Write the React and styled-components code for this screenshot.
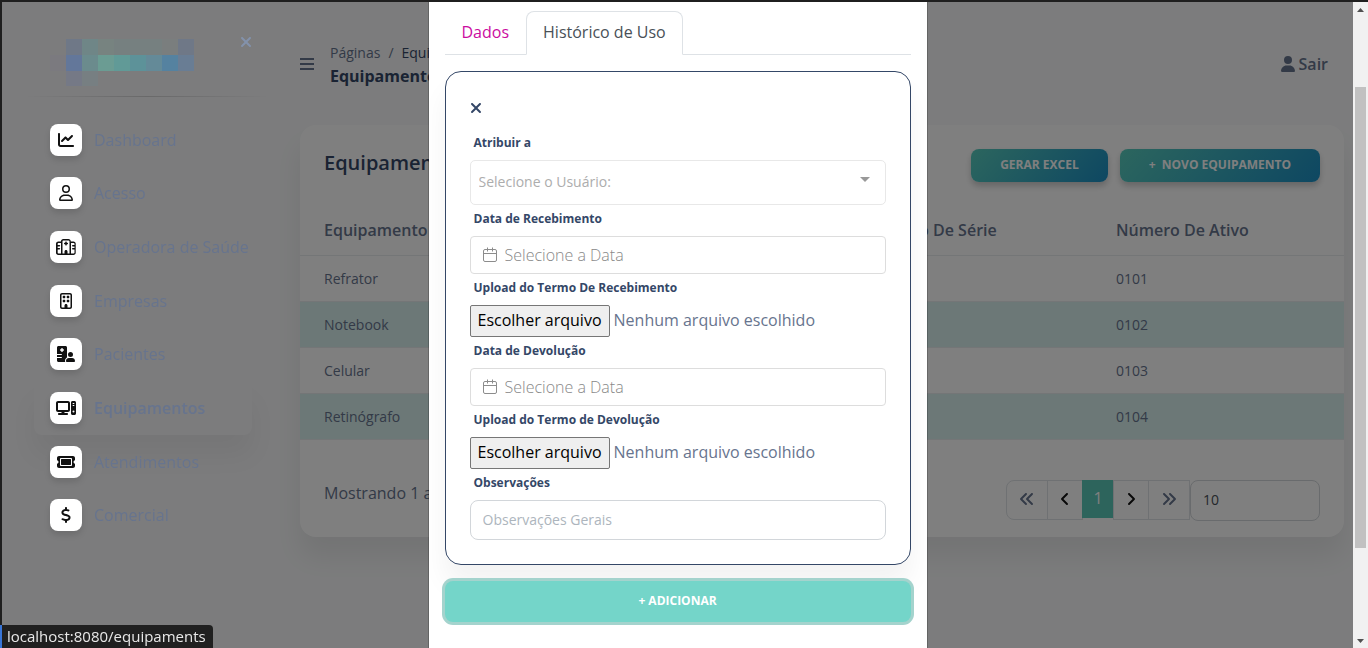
import React from "react";
import styled, { createGlobalStyle, css } from "styled-components";
import {
  FaChartLine,
  FaRegUser,
  FaRegHospital,
  FaRegBuilding,
  FaHospitalUser,
  FaComputer,
  FaTicket,
  FaDollarSign,
  FaUser,
  FaXmark,
  FaAnglesLeft,
  FaAnglesRight,
  FaAngleLeft,
  FaAngleRight,
} from "react-icons/fa6";

const GlobalStyle = createGlobalStyle`
  *, *::before, *::after { box-sizing: border-box; }
  body {
    margin: 0;
    overflow: hidden;
    background: #f8f9fa;
    color: #67748e;
    font: 400 16px/24px "Open Sans", "Noto Sans", sans-serif;
  }
  button, input, select { font-family: inherit; }
  a { color: inherit; text-decoration: none; }
`;

const Frame = styled.div`
  display: flex;
  min-height: 100vh;
  border-top: 2px solid #1f1f1f;
  border-left: 2px solid #1f1f1f;
`;

/* ---------- sidebar ---------- */

const Sidebar = styled.aside`
  position: relative;
  z-index: 3;
  flex: 0 0 282px;
  padding: 36px 32px 0;
`;

const Brand = styled.div`
  display: flex;
  justify-content: space-between;
  align-items: flex-start;
  height: 58px;
  padding-left: 16px;
`;

const IconButton = styled.button`
  display: flex;
  align-items: center;
  padding: 0;
  border: 0;
  background: none;
  color: ${(p) => p.$color};
  font-size: 16px;
  line-height: 24px;
  height: ${(p) => p.$height}px;
  svg {
    width: 12px;
    height: 16px;
  }
`;

const Divider = styled.hr`
  height: 1px;
  margin: 0 -16px 16px -8px;
  border: 0;
  background: linear-gradient(90deg, transparent, rgba(0, 0, 0, 0.15), transparent);
`;

const Menu = styled.nav`
  display: flex;
  flex-direction: column;
  min-height: 429px;
`;

const MenuLink = styled.a`
  display: flex;
  flex: 1;
  align-items: center;
  gap: 12px;
  padding: 0 0 0 16px;
  border-radius: 8px;
  white-space: nowrap;
  ${(p) =>
    p.$active &&
    css`
      font-weight: 600;
      box-shadow: 0 20px 27px rgba(0, 0, 0, 0.05);
    `}
`;

const MenuIcon = styled.span`
  display: flex;
  flex: none;
  align-items: center;
  justify-content: center;
  width: 32px;
  height: 32px;
  border-radius: 8px;
  background: #fff;
  color: #111;
  box-shadow: 0 4px 6px rgba(0, 0, 0, 0.12);
  svg {
    width: 20px;
    height: 16px;
  }
`;

const menu = [
  ["Dashboard", FaChartLine],
  ["Acesso", FaRegUser],
  ["Operadora de Saúde", FaRegHospital],
  ["Empresas", FaRegBuilding],
  ["Pacientes", FaHospitalUser],
  ["Equipamentos", FaComputer],
  ["Atendimentos", FaTicket],
  ["Comercial", FaDollarSign],
];

const logoCells = [
  [null, "#6f7887", "#6f8687", "#778380", "#768080", "#768080", "#768080", "#7a7e7e", "#6f7887"],
  ["#7b7a7f", "#63779a", "#6b8b8d", "#6b9c93", "#619a97", "#5d9299", "#648a98", "#5582a0", "#697d94"],
  [null, "#757986", "#777f82", null, null, null, null, null, null],
];

const Logo = () => (
  <svg width="144" height="48" viewBox="0 0 144 48" shapeRendering="crispEdges" aria-hidden="true">
    {logoCells.map((row, y) =>
      row.map(
        (fill, x) => fill && <rect key={`${x}-${y}`} x={x * 16} y={y * 16 + 1} width="16" height="16" fill={fill} />
      )
    )}
  </svg>
);

/* ---------- main page ---------- */

const Main = styled.main`
  flex: 1;
  min-width: 0;
  padding: 38px 9px 0 16px;
`;

const TopBar = styled.header`
  display: flex;
  align-items: center;
  gap: 16px;
  padding-right: 16px;
  margin-bottom: 37px;
`;

const Burger = styled.button`
  display: flex;
  flex-direction: column;
  gap: 3px;
  width: 14px;
  padding: 0;
  border: 0;
  background: none;
  span {
    height: 2px;
    background: #67748e;
  }
`;

const Crumbs = styled.div`
  flex: 1;
  padding-top: 2px;
  font-size: 14px;
  line-height: 22px;
  color: #344767;
  span { color: #67748e; }
  i { font-style: normal; padding: 0 8px; color: #67748e; }
  h1 {
    margin: 0;
    font-size: 16px;
    line-height: 24px;
    font-weight: 700;
  }
`;

const Logout = styled.a`
  display: flex;
  align-items: center;
  gap: 4px;
  font-weight: 600;
  svg {
    width: 14px;
    height: 16px;
  }
`;

const Card = styled.section`
  border-radius: 16px;
  background: #fff;
  box-shadow: 0 20px 27px rgba(0, 0, 0, 0.07);
`;

const CardHead = styled.div`
  display: flex;
  gap: 12px;
  padding: 24px 24px 22px;
  h2 {
    flex: 1;
    margin: 0;
    color: #344767;
    font-size: 20px;
    line-height: 28px;
    font-weight: 600;
  }
`;

const GradientButton = styled.button`
  height: 33px;
  padding: 0 29px 2px;
  border: 0;
  border-radius: 8px;
  background: linear-gradient(130deg, #58ccbd, #1c8fc4);
  box-shadow: 0 4px 6px rgba(0, 0, 0, 0.2);
  color: #fff;
  font-size: 12px;
  line-height: 16px;
  font-weight: 700;
  white-space: pre;
`;

const Table = styled.table`
  width: 100%;
  border-collapse: collapse;
  table-layout: fixed;
  text-align: left;
  th, td { padding: 2px 24px 0; border-bottom: 1px solid #e9ecef; }
  th { height: 51px; font-weight: 600; }
  th:nth-child(2) { width: 251px; }
  th:nth-child(3) { width: 252px; }
  td { height: 46px; font-size: 14px; }
  tbody tr:nth-child(even) { background: #d8f1ef; }
`;

const CardFoot = styled.div`
  display: flex;
  justify-content: space-between;
  padding: 40px 24px 16px;
  p { margin: 1px 0 0; }
`;

const Pager = styled.div`
  display: flex;
  align-items: flex-start;
`;

const PageButton = styled.button`
  display: flex;
  align-items: center;
  justify-content: center;
  width: ${(p) => p.$width}px;
  height: 40px;
  margin-left: -1px;
  padding: 0 0 2px;
  border: 1px solid #dee2e6;
  border-radius: ${(p) => (p.$first ? "8px 0 0 8px" : "0")};
  background: #fff;
  color: ${(p) => (p.$dark ? "#111" : "#67748e")};
  font-size: 16px;
  ${(p) =>
    p.$active &&
    css`
      height: 38px;
      border-color: #5ac8b8;
      background: #5ac8b8;
      color: #fff;
    `}
`;

const PageSize = styled.select`
  appearance: none;
  width: 130px;
  height: 41px;
  padding: 0 12px 2px;
  border: 1px solid #d2d6da;
  border-radius: 8px;
  background: #fff;
  color: #495057;
  font-size: 14px;
`;

/* ---------- modal ---------- */

const Backdrop = styled.div`
  position: fixed;
  z-index: 2;
  top: 2px;
  right: 15px;
  bottom: 0;
  left: 2px;
  display: flex;
  justify-content: center;
  background: rgba(0, 0, 0, 0.5);
`;

const Dialog = styled.div`
  width: 500px;
  padding: 9px 16px 0;
  border: solid rgba(0, 0, 0, 0.2);
  border-width: 0 1px;
  background: #fff;
  background-clip: padding-box;
`;

const Tabs = styled.div`
  display: flex;
  margin-bottom: 16px;
  border-bottom: 1px solid #dee2e6;
`;

const Tab = styled.button`
  height: 44px;
  margin-bottom: -1px;
  padding: 0 16px 2px;
  border: 1px solid transparent;
  border-radius: 8px 8px 0 0;
  background: none;
  color: #cb0c9f;
  font-size: 16px;
  line-height: 24px;
  ${(p) =>
    p.$active &&
    css`
      border-color: #dee2e6 #dee2e6 #fff;
      background: #fff;
      color: #495057;
    `}
`;

const Panel = styled.form`
  display: flex;
  flex-direction: column;
  align-items: stretch;
  padding: 24px;
  border: 1px solid #344767;
  border-radius: 16px;
  background: #fff;
  box-shadow: 0 20px 27px rgba(0, 0, 0, 0.05);
`;

const Label = styled.label`
  padding: 5px 4px 8px;
  color: #344767;
  font-size: 12px;
  line-height: 18px;
  font-weight: 700;
`;

const CloseRow = styled.div`
  padding-bottom: 9px;
`;

const SelectBox = styled.div`
  display: grid;
  align-items: center;
  > * { grid-area: 1 / 1; }
  svg { justify-self: end; margin: 0 16px 6px; pointer-events: none; }
`;

const UserSelect = styled.select`
  appearance: none;
  height: 45px;
  padding: 0 8px 2px;
  border: 1px solid #e8e8e8;
  border-radius: 5px;
  background: #fff;
  color: #adadad;
  font-size: 14px;
`;

const DateBox = styled.div`
  display: flex;
  align-items: center;
  gap: 8px;
  height: 38px;
  padding: 0 12px;
  border: 1px solid #ddd;
  border-radius: 4px;
  input {
    flex: 1;
    min-width: 0;
    padding: 0;
    border: 0;
    outline: 0;
    background: none;
    color: #444;
    font-size: 16px;
    line-height: 24px;
  }
  input::placeholder { color: #888; font-weight: 300; }
`;

const FileRow = styled.div`
  display: flex;
  gap: 4px;
  height: 32px;
  line-height: 30px;
  input {
    position: absolute;
    width: 1px;
    height: 1px;
    opacity: 0;
  }
`;

const FileButton = styled.label`
  padding: 0 7px;
  border: 1px solid #767676;
  border-radius: 2px;
  background: #efefef;
  color: #000;
  line-height: 28px;
`;

const NotesInput = styled.input`
  height: 40px;
  padding: 0 12px 2px;
  border: 1px solid #d2d6da;
  border-radius: 8px;
  color: #495057;
  font-size: 14px;
  &::placeholder { color: #adb5bd; }
`;

const AddButton = styled.button`
  width: 100%;
  height: 41px;
  margin-top: 16px;
  padding: 0 0 2px;
  border: 0;
  border-radius: 8px;
  background: #74d5c9;
  box-shadow: 0 0 0 3px #a4d3cd;
  color: #fff;
  font-size: 12px;
  line-height: 16px;
  font-weight: 700;
`;

/* ---------- browser chrome ---------- */

const ScrollTrack = styled.div`
  display: flex;
  flex-direction: column;
  align-items: center;
  justify-content: space-between;
  flex: 0 0 15px;
  padding: 6px 0 5px;
  background: #f1f1f1;
`;

const ScrollThumb = styled.div`
  flex: 0 1 461px;
  width: 11px;
  margin: 75px 0 auto;
  background: #c1c1c1;
`;

const StatusBubble = styled.div`
  position: fixed;
  z-index: 4;
  left: 0;
  bottom: 0;
  height: 23px;
  padding: 0 7px 0 5px;
  border-left: 2px solid #3875d7;
  border-radius: 0 4px 0 0;
  background: #202020;
  color: #e8e8e8;
  font-size: 15px;
  line-height: 22px;
`;

const Calendar = () => (
  <svg width="14" height="16" viewBox="0 0 14 16" fill="none" stroke="#8c8c8c" aria-hidden="true">
    <rect x="0.5" y="2.5" width="13" height="12" rx="1.5" />
    <path d="M.5 6.5h13M4.5 .5v4M9.5 .5v4" />
  </svg>
);

const DateField = ({ id, label }) => (
  <>
    <Label htmlFor={id}>{label}</Label>
    <DateBox>
      <Calendar />
      <input id={id} type="text" placeholder="Selecione a Data" />
    </DateBox>
  </>
);

const FileField = ({ id, label }) => (
  <>
    <Label htmlFor={id}>{label}</Label>
    <FileRow>
      <input id={id} type="file" />
      <FileButton htmlFor={id}>Escolher arquivo</FileButton>
      <span>Nenhum arquivo escolhido</span>
    </FileRow>
  </>
);

const rows = [
  ["Refrator", "0101"],
  ["Notebook", "0102"],
  ["Celular", "0103"],
  ["Retinógrafo", "0104"],
];

export default function App() {
  return (
    <Frame>
      <GlobalStyle />
      <Sidebar>
        <Brand>
          <Logo />
          <IconButton $color="#8392ab" $height={8} aria-label="Fechar menu">
            <FaXmark />
          </IconButton>
        </Brand>
        <Divider />
        <Menu>
          {menu.map(([name, Icon]) => (
            <MenuLink key={name} href="#" $active={name === "Equipamentos"}>
              <MenuIcon>
                <Icon />
              </MenuIcon>
              {name}
            </MenuLink>
          ))}
        </Menu>
      </Sidebar>

      <Main>
        <TopBar>
          <Burger aria-label="Menu">
            <span />
            <span />
            <span />
          </Burger>
          <Crumbs>
            <span>Páginas</span>
            <i>/</i>Equipamentos
            <h1>Equipamentos</h1>
          </Crumbs>
          <Logout href="#">
            <FaUser /> Sair
          </Logout>
        </TopBar>

        <Card>
          <CardHead>
            <h2>Equipamentos</h2>
            <GradientButton>GERAR EXCEL</GradientButton>
            <GradientButton>{"+  NOVO EQUIPAMENTO"}</GradientButton>
          </CardHead>
          <Table>
            <thead>
              <tr>
                <th>Equipamento</th>
                <th>Número De Série</th>
                <th>Número De Ativo</th>
              </tr>
            </thead>
            <tbody>
              {rows.map(([name, asset]) => (
                <tr key={asset}>
                  <td>{name}</td>
                  <td />
                  <td>{asset}</td>
                </tr>
              ))}
            </tbody>
          </Table>
          <CardFoot>
            <p>Mostrando 1 a 4</p>
            <Pager>
              <PageButton $width={42} $first aria-label="Primeira">
                <FaAnglesLeft />
              </PageButton>
              <PageButton $width={36} $dark aria-label="Anterior">
                <FaAngleLeft />
              </PageButton>
              <PageButton $width={32} $active>
                1
              </PageButton>
              <PageButton $width={36} $dark aria-label="Próxima">
                <FaAngleRight />
              </PageButton>
              <PageButton $width={42} aria-label="Última">
                <FaAnglesRight />
              </PageButton>
              <PageSize aria-label="Itens por página" defaultValue="10">
                <option>10</option>
              </PageSize>
            </Pager>
          </CardFoot>
        </Card>
      </Main>

      <ScrollTrack aria-hidden="true">
        <svg width="7" height="4">
          <path d="M0 4L3.5 0L7 4z" fill="#505050" />
        </svg>
        <ScrollThumb />
        <svg width="7" height="4">
          <path d="M0 0L3.5 4L7 0z" fill="#505050" />
        </svg>
      </ScrollTrack>

      <Backdrop>
        <Dialog role="dialog" aria-label="Histórico de Uso">
          <Tabs role="tablist">
            <Tab role="tab">Dados</Tab>
            <Tab role="tab" aria-selected="true" $active>
              Histórico de Uso
            </Tab>
          </Tabs>
          <Panel>
            <CloseRow>
              <IconButton type="button" $color="#344767" $height={24} aria-label="Remover">
                <FaXmark />
              </IconButton>
            </CloseRow>
            <Label htmlFor="user">Atribuir a</Label>
            <SelectBox>
              <UserSelect id="user">
                <option>Selecione o Usuário:</option>
              </UserSelect>
              <svg width="10" height="5" aria-hidden="true">
                <path d="M0 0h10L5 5z" fill="#999" />
              </svg>
            </SelectBox>
            <DateField id="received" label="Data de Recebimento" />
            <FileField id="receivedFile" label="Upload do Termo De Recebimento" />
            <DateField id="returned" label="Data de Devolução" />
            <FileField id="returnedFile" label="Upload do Termo de Devolução" />
            <Label htmlFor="notes">Observações</Label>
            <NotesInput id="notes" placeholder="Observações Gerais" />
          </Panel>
          <AddButton type="button">+ ADICIONAR</AddButton>
        </Dialog>
      </Backdrop>

      <StatusBubble>localhost:8080/equipaments</StatusBubble>
    </Frame>
  );
}
